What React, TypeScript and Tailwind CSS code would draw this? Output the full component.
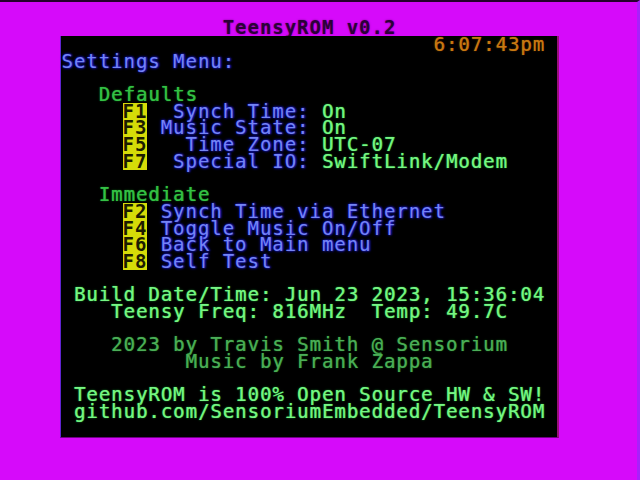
import React from "react";

type Tone = "blue" | "green" | "light" | "dim" | "amber" | "key" | "title";
type Run = [string, Tone];

const tones: Record<Tone, string> = {
  blue: "text-[#7484f4] [text-shadow:0_0_3px_#1414e0,1px_0_2px_#2020d0]",
  green: "text-[#35c046] [text-shadow:0_0_2px_#0a6a14,0.4px_0_0_#35c046]",
  light: "text-[#78f585] [text-shadow:0_0_2px_#12902a,0.5px_0_0_#58d868]",
  dim: "text-[#4cad58] [text-shadow:0_0_2px_#0a5a12,0.4px_0_0_#3c9a48]",
  amber: "text-[#c87912] [text-shadow:0_0_2px_#5a2c00,0.4px_0_0_#b86a10]",
  key: "-ml-px mr-px bg-[#d6dc08] font-bold text-[#1c1c00]",
  title: "font-bold text-[#2c0038] [text-shadow:0_0_2px_#7a0090]",
};

const lines: Run[][] = [
  [["                              6:07:43pm", "amber"]],
  [["Settings Menu:", "blue"]],
  [],
  [["   Defaults", "green"]],
  [["     ", "blue"], ["F1", "key"], ["  Synch Time: ", "blue"], ["On", "light"]],
  [["     ", "blue"], ["F3", "key"], [" Music State: ", "blue"], ["On", "light"]],
  [["     ", "blue"], ["F5", "key"], ["   Time Zone: ", "blue"], ["UTC-07", "light"]],
  [["     ", "blue"], ["F7", "key"], ["  Special IO: ", "blue"], ["SwiftLink/Modem", "light"]],
  [],
  [["   Immediate", "green"]],
  [["     ", "blue"], ["F2", "key"], [" Synch Time via Ethernet", "blue"]],
  [["     ", "blue"], ["F4", "key"], [" Toggle Music On/Off", "blue"]],
  [["     ", "blue"], ["F6", "key"], [" Back to Main menu", "blue"]],
  [["     ", "blue"], ["F8", "key"], [" Self Test", "blue"]],
  [],
  [[" Build Date/Time: Jun 23 2023, 15:36:04", "light"]],
  [["    Teensy Freq: 816MHz  Temp: 49.7C", "light"]],
  [],
  [["    2023 by Travis Smith @ Sensorium", "dim"]],
  [["          Music by Frank Zappa", "dim"]],
  [],
  [[" TeensyROM is 100% Open Source HW & SW!", "light"]],
  [[" github.com/SensoriumEmbedded/TeensyROM", "light"]],
  [],
];

function Line({ runs }: { runs: Run[] }) {
  return (
    <div className="flex h-[16.7px] whitespace-pre">
      {runs.map(([text, tone], i) => (
        <span key={i} className={`block h-[16.7px] shrink-0 ${tones[tone]}`}>
          {text}
        </span>
      ))}
    </div>
  );
}

export default function App() {
  return (
    <main className="flex h-[480px] w-[640px] flex-col overflow-hidden border-t-2 border-r-[3px] border-t-[#26002c] border-r-[#a820fa] bg-[#d60afa] pt-[17px] pl-[60px] font-['DejaVu_Sans_Mono','Liberation_Mono',monospace] text-[19px] leading-[16px] tracking-[0.961px]">
      <header className="h-[17px] pl-[1.5px]">
        <Line runs={[["             TeensyROM v0.2", "title"]]} />
      </header>
      <section className="h-[402px] w-[499px] border-r-2 border-b border-l border-r-[#98107a] border-b-[#700084] border-l-[#6024d0] bg-black pl-[0.5px]">
        {lines.map((runs, i) => (
          <Line key={i} runs={runs} />
        ))}
      </section>
    </main>
  );
}
